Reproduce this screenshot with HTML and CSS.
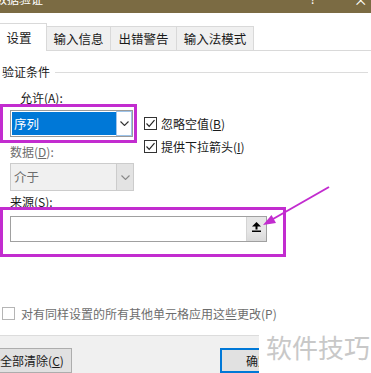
FILE: index.html
```html
<html>
  <head>
    <meta charset="utf-8" />
    <link rel="stylesheet" href="styles.css">
  </head>
  <body>
    <div class="titlebar">
      <span class="title">数据验证</span>
      <span class="help">?</span>
      <span class="close">×</span>
    </div>

    <div class="tabs">
      <div class="tab active" style="width: 55px">设置</div>
      <div class="tab" style="width: 64px">输入信息</div>
      <div class="tab" style="width: 66px">出错警告</div>
      <div class="tab" style="width: 77px">输入法模式</div>
    </div>

    <div class="page">
      <div class="groupTitle"><span>验证条件</span><i></i></div>

      <div class="label allow">允许(<u>A</u>):</div>
      <div class="row">
        <div class="leftCol">
          <div class="mark markAllow">
            <div class="combo">
              <span class="comboValue">序列</span>
              <span class="comboArrow">
                <svg width="9" height="5" viewBox="0 0 9 5"><polyline points="0.5,0.5 4.5,4.5 8.5,0.5" fill="none" stroke="#333" stroke-width="1.1"/></svg>
              </span>
            </div>
          </div>
          <div class="label dim data">数据(<u>D</u>):</div>
          <div class="combo disabled">
            <span class="comboValue">介于</span>
            <span class="comboArrow">
              <svg width="9" height="5" viewBox="0 0 9 5"><polyline points="0.5,0.5 4.5,4.5 8.5,0.5" fill="none" stroke="#888" stroke-width="1.1"/></svg>
            </span>
          </div>
        </div>
        <div class="rightCol">
          <label class="check">
            <span class="box"><svg width="11" height="11" viewBox="0 0 11 11"><polyline points="1.5,5.5 4.2,8.3 9.5,2.2" fill="none" stroke="#222" stroke-width="1.2"/></svg></span>
            <span>忽略空值(<u>B</u>)</span>
          </label>
          <label class="check">
            <span class="box"><svg width="11" height="11" viewBox="0 0 11 11"><polyline points="1.5,5.5 4.2,8.3 9.5,2.2" fill="none" stroke="#222" stroke-width="1.2"/></svg></span>
            <span>提供下拉箭头(<u>I</u>)</span>
          </label>
        </div>
      </div>

      <div class="label source">来源(<u>S</u>):</div>
      <div class="mark markSource">
        <div class="sourceInput">
          <span class="field"></span>
          <span class="pick">
            <svg width="9" height="10" viewBox="0 0 9 10">
              <polygon points="0,4.5 4.5,0 9,4.5" fill="#000"/>
              <rect x="3.5" y="4" width="2" height="3.5" fill="#000"/>
              <rect x="0" y="8.5" width="9" height="1.5" fill="#000"/>
            </svg>
          </span>
        </div>
      </div>

      <label class="check dim applyAll">
        <span class="box light"></span>
        <span>对有同样设置的所有其他单元格应用这些更改(P)</span>
      </label>
    </div>

    <div class="footer">
      <button class="btn clearAll">全部清除(<u>C</u>)</button>
      <button class="btn ok">确定</button>
    </div>

    <svg class="pointer" width="371" height="373" viewBox="0 0 371 373">
      <line x1="329" y1="187" x2="273" y2="219" stroke="#c22ccf" stroke-width="2"/>
      <polygon points="263,225 276,223 271.5,215" fill="#c22ccf"/>
    </svg>

    <div class="watermark">软件技巧</div>
  </body>
</html>
```

FILE: styles.css
```css
html,
body {
  margin: 0;
  width: 371px;
  height: 373px;
  overflow: hidden;
  background: #fff;
  font-family: "Noto Sans CJK SC", "Noto Sans", sans-serif;
  font-size: 12px;
  color: #1a1a1a;
}
body {
  position: relative;
}
u {
  text-decoration: underline;
}

.titlebar {
  height: 13px;
  background: #7b6b43;
  color: #fff;
  display: flex;
  overflow: hidden;
  line-height: 14px;
}
.titlebar span {
  margin-top: -8px;
}
.title {
  margin-left: -5px;
}
.help {
  margin-left: 267px;
}
.close {
  margin-left: 38px;
  font-size: 14px;
}

.tabs {
  margin-top: 10px;
  height: 27px;
  display: flex;
  align-items: flex-end;
  border-bottom: 1px solid #d9d9d9;
  margin-left: -8px;
}
.tab {
  box-sizing: border-box;
  height: 24px;
  border: 1px solid #d9d9d9;
  border-bottom: none;
  border-left: none;
  background: #f0f0f0;
  text-align: center;
  font-size: 12.5px;
  line-height: 23px;
}
.tab.active {
  height: 28px;
  margin-bottom: -1px;
  background: #fff;
  line-height: 28px;
}

.page {
  display: flow-root;
  height: 284px;
  border-bottom: 1px solid #dcdcdc;
  padding-right: 3px;
}
.groupTitle {
  display: flex;
  align-items: center;
  margin-top: 14px;
  margin-left: 2px;
  line-height: 14px;
}
.groupTitle i {
  flex: 1;
  height: 1px;
  background: #dcdcdc;
  margin-left: 5px;
}

.label {
  line-height: 14px;
  height: 14px;
  margin-left: 10px;
}
.dim {
  color: #6d6d6d;
}
.allow {
  margin-top: 12px;
  margin-left: 20px;
}
.data {
  margin-top: 2px;
}
.source {
  margin-top: 4px;
}

.row {
  display: flex;
  align-items: flex-start;
  margin-top: -1px;
}
.rightCol {
  margin-left: 7px;
  margin-top: 13px;
  display: flex;
  flex-direction: column;
  gap: 10px;
}

.mark {
  box-sizing: border-box;
  border: 3px solid #c22ccf;
}
.markAllow {
  width: 137px;
  height: 39px;
  padding: 3px 0 0 7px;
}
.markSource {
  position: relative;
  width: 286px;
  height: 50px;
  margin-top: -2px;
  padding: 6px 0 0 7px;
}

.combo {
  box-sizing: border-box;
  width: 123px;
  height: 27px;
  border: 1px solid #9a9a9a;
  background: #fff;
  display: flex;
  padding: 1px 0 1px 1px;
}
.comboValue {
  flex: 1;
  background: #0078d7;
  color: #fff;
  line-height: 23px;
  padding-left: 2px;
  font-size: 12.5px;
}
.comboArrow {
  box-sizing: border-box;
  width: 16px;
  margin: -1px 0 -1px 0;
  border: 1px solid #9ec4ea;
  display: flex;
  align-items: center;
  justify-content: center;
}
.combo.disabled {
  width: 124px;
  height: 28px;
  margin: 4px 0 0 10px;
  border-color: #cccccc;
  background: #f0f0f0;
  padding: 0;
}
.combo.disabled .comboValue {
  background: none;
  color: #6d6d6d;
  line-height: 26px;
  padding-left: 3px;
}
.combo.disabled .comboArrow {
  width: 17px;
  margin: 0;
  border: none;
  border-left: 1px solid #cccccc;
  background: #e3e3e3;
}

.check {
  display: flex;
  align-items: center;
  gap: 4px;
  height: 13px;
  line-height: 14px;
}
.box {
  box-sizing: border-box;
  width: 13px;
  height: 13px;
  border: 1px solid #333;
  background: #fff;
  display: flex;
  align-items: center;
  justify-content: center;
}
.box.light {
  border-color: #b5b5b5;
}
.applyAll {
  margin-top: 50px;
  margin-left: 2px;
  gap: 6px;
}

.sourceInput {
  box-sizing: border-box;
  width: 257px;
  height: 26px;
  border: 1px solid #a0a0a0;
  background: #fff;
  display: flex;
}
.field {
  flex: 1;
}
.pick {
  width: 20px;
  background: linear-gradient(#e6e6e6 60%, #d9d9d9);
  border-left: 1px solid #d4d4d4;
  display: flex;
  justify-content: center;
  padding-top: 5px;
  box-sizing: border-box;
}

.footer {
  background: #f0f0f0;
  height: 37px;
  padding-top: 12px;
  display: flex;
}
.btn {
  box-sizing: border-box;
  height: 25px;
  border: 1px solid #adadad;
  background: #e1e1e1;
  font-family: inherit;
  font-size: 12px;
  color: #1a1a1a;
  padding: 0;
}
.clearAll {
  width: 80px;
  margin-left: -8px;
}
.ok {
  width: 76px;
  margin-left: 148px;
  border: 2px solid #0078d7;
}

.pointer {
  position: absolute;
  left: 0;
  top: 0;
  pointer-events: none;
}
.watermark {
  position: absolute;
  left: 259px;
  top: 330px;
  width: 112px;
  height: 43px;
  background: #fff;
  color: #c8c8c8;
  font-size: 26px;
  line-height: 34px;
  padding-left: 7px;
  box-sizing: border-box;
}
```
